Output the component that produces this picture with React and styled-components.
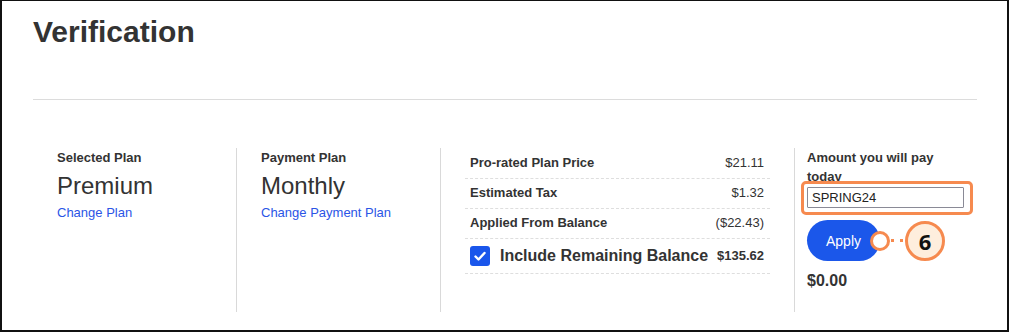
import React from 'react';
import styled, { createGlobalStyle } from 'styled-components';

const Global = createGlobalStyle`
  html, body {
    margin: 0;
    padding: 0;
    background: #fff;
  }
  body {
    font-family: "Liberation Sans", Arial, sans-serif;
    color: #333;
  }
`

const Frame = styled.div`
  box-sizing: border-box;
  width: 1009px;
  height: 332px;
  border: 2px solid #111;
  border-top-width: 1px;
  padding: 16px 30px 0 31px;
  overflow: hidden;
`

const Title = styled.h1`
  margin: 0;
  font-size: 30px;
  line-height: 30px;
  font-weight: 700;
  color: #333;
`

const Rule = styled.hr`
  margin: 52px 0 0;
  border: 0;
  height: 1px;
  background: #dcdcdc;
`

const Columns = styled.div`
  display: grid;
  grid-template-columns: 203px 204px 354px 1fr;
  height: 164px;
  margin-top: 48px;
`

const Col = styled.div`
  box-sizing: border-box;
  display: flex;
  flex-direction: column;
  align-items: flex-start;
  padding: ${p => p.$pad || '2px 0 0 24px'};
  border-left: ${p => (p.$first ? 'none' : '1px solid #d9d9d9')};
`

const Label = styled.div`
  font-size: 13px;
  line-height: 16px;
  font-weight: 700;
`

const Big = styled.div`
  margin-top: 6px;
  font-size: 24px;
  line-height: 28px;
`

const Link = styled.a`
  margin-top: 5px;
  font-size: 13px;
  line-height: 16px;
  color: #2b55e6;
  text-decoration: none;
  cursor: pointer;
`

const Summary = styled.div`
  width: 100%;
  display: flex;
  flex-direction: column;
`

const Row = styled.div`
  display: flex;
  align-items: center;
  justify-content: space-between;
  padding: ${p => (p.$tall ? '7px 6px 7px 5px' : '6px 6px 7px 5px')};
  border-bottom: 1px dashed #dedede;
  font-size: 13px;
  line-height: 16px;
`

const RowLabel = styled.span`
  font-weight: 700;
`

const Value = styled.span`
  font-weight: ${p => (p.$bold ? 700 : 400)};
`

const CheckLabel = styled.label`
  display: flex;
  align-items: center;
  gap: 10px;
  font-size: 16px;
  line-height: 20px;
  font-weight: 700;
`

const Box = styled.span`
  width: 20px;
  height: 20px;
  border-radius: 3px;
  background: #1a56eb;
  display: inline-flex;
  align-items: center;
  justify-content: center;
`

const PayLabel = styled.div`
  font-size: 13px;
  line-height: 19px;
  font-weight: 700;
`

const InputWrap = styled.div`
  position: relative;
  width: 100%;
  margin-top: 1px;
`

const Highlight = styled.div`
  position: absolute;
  top: -6px;
  left: -6px;
  right: -8px;
  bottom: -7px;
  border: 3px solid #f68a4f;
  border-radius: 5px;
  background: #fff;
`

const Input = styled.input`
  position: relative;
  box-sizing: border-box;
  display: block;
  width: 157px;
  height: 21px;
  padding: 0 4px;
  border: 1px solid #8a8a96;
  border-radius: 1px;
  font-family: "Liberation Sans", Arial, sans-serif;
  font-size: 13px;
  color: #222;
  outline: none;
`

const ApplyRow = styled.div`
  position: relative;
  margin-top: 12px;
  display: flex;
  align-items: center;
`

const Button = styled.button`
  width: 73px;
  height: 41px;
  border: 0;
  border-radius: 21px;
  background: #1b57ea;
  color: #fff;
  font-family: "Liberation Sans", Arial, sans-serif;
  font-size: 14px;
  cursor: pointer;
`

const Marker = styled.div`
  position: absolute;
  left: 63px;
  top: 50%;
  transform: translateY(-50%);
  display: flex;
  align-items: center;
`

const Dot = styled.span`
  box-sizing: border-box;
  width: 20px;
  height: 20px;
  border-radius: 50%;
  border: 3px solid #f68a4f;
  background: #fff;
`

const Dashes = styled.span`
  width: 15px;
  height: 3px;
  background: repeating-linear-gradient(90deg, transparent 0 1px, #f68a4f 1px 4px, transparent 4px 9px);
`

const Bubble = styled.span`
  box-sizing: border-box;
  width: 40px;
  height: 40px;
  border-radius: 50%;
  border: 3px solid #f68a4f;
  background: #feeedd;
  display: flex;
  align-items: center;
  justify-content: center;
  font-family: "Open Sans", "Liberation Sans", sans-serif;
  font-size: 22px;
  font-weight: 700;
  color: #111;
`

const Total = styled.div`
  margin-top: 10px;
  font-size: 16px;
  line-height: 20px;
  font-weight: 700;
`

const lines = [
  ['Pro-rated Plan Price', '$21.11'],
  ['Estimated Tax', '$1.32'],
  ['Applied From Balance', '($22.43)'],
]

export default function App() {
  return (
    <>
      <Global />
      <Frame>
        <Title>Verification</Title>
        <Rule />
        <Columns>
          <Col $first $pad="2px 0 0 24px">
            <Label>Selected Plan</Label>
            <Big>Premium</Big>
            <Link>Change Plan</Link>
          </Col>
          <Col>
            <Label>Payment Plan</Label>
            <Big>Monthly</Big>
            <Link>Change Payment Plan</Link>
          </Col>
          <Col $pad="1px 24px 0 24px">
            <Summary>
              {lines.map(([l, v]) => (
                <Row key={l}>
                  <RowLabel>{l}</RowLabel>
                  <Value>{v}</Value>
                </Row>
              ))}
              <Row $tall>
                <CheckLabel>
                  <Box>
                    <svg width="14" height="14" viewBox="0 0 14 14">
                      <path d="M2.5 7.5l3 3L11.5 4" fill="none" stroke="#fff" strokeWidth="2.4" strokeLinecap="round" strokeLinejoin="round" />
                    </svg>
                  </Box>
                  Include Remaining Balance
                </CheckLabel>
                <Value $bold>$135.62</Value>
              </Row>
            </Summary>
          </Col>
          <Col $pad="0 12px 0 12px">
            <PayLabel>Amount you will pay today</PayLabel>
            <InputWrap>
              <Highlight />
              <Input defaultValue="SPRING24" />
            </InputWrap>
            <ApplyRow>
              <Button>Apply</Button>
              <Marker>
                <Dot />
                <Dashes />
                <Bubble>6</Bubble>
              </Marker>
            </ApplyRow>
            <Total>$0.00</Total>
          </Col>
        </Columns>
      </Frame>
    </>
  );
}
